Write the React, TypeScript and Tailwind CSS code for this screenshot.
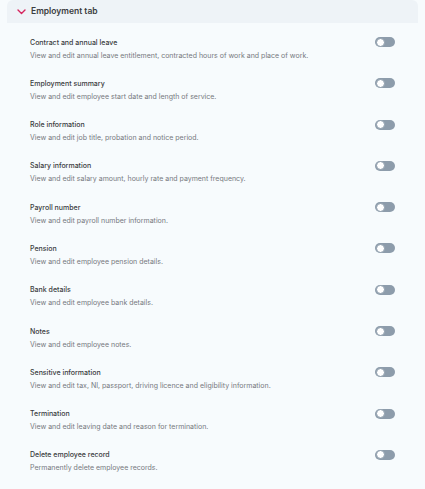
import React, { useState } from "react";

interface Permission {
  title: string;
  description: string;
}

const permissions: Permission[] = [
  {
    title: "Contract and annual leave",
    description:
      "View and edit annual leave entitlement, contracted hours of work and place of work.",
  },
  { title: "Employment summary", description: "View and edit employee start date and length of service." },
  { title: "Role information", description: "View and edit job title, probation and notice period." },
  { title: "Salary information", description: "View and edit salary amount, hourly rate and payment frequency." },
  { title: "Payroll number", description: "View and edit payroll number information." },
  { title: "Pension", description: "View and edit employee pension details." },
  { title: "Bank details", description: "View and edit employee bank details." },
  { title: "Notes", description: "View and edit employee notes." },
  {
    title: "Sensitive information",
    description: "View and edit tax, NI, passport, driving licence and eligibility information.",
  },
  { title: "Termination", description: "View and edit leaving date and reason for termination." },
  { title: "Delete employee record", description: "Permanently delete employee records." },
];

const Toggle: React.FC<{ on: boolean; onChange: () => void }> = ({ on, onChange }) => (
  <button
    type="button"
    onClick={onChange}
    className={`relative block h-[10px] w-[20px] shrink-0 rounded-full ${on ? "bg-[#d6245d]" : "bg-[#8d9cab]"}`}
  >
    <span
      className={`absolute top-[0.5px] h-[9px] w-[9px] rounded-full border border-[#8d9cab] bg-white ${on ? "left-[10.5px]" : "left-[0.5px]"}`}
    />
  </button>
);

const App: React.FC = () => {
  const [enabled, setEnabled] = useState<boolean[]>(permissions.map(() => false));

  const toggle = (i: number) => setEnabled((prev) => prev.map((v, idx) => (idx === i ? !v : v)));

  return (
    <div className="min-h-[489px] w-[425px] bg-[#f7fbfd] font-['Inter',sans-serif]">
      <div className="ml-[7px] mr-[7px] flex h-[23px] items-center rounded-t-[6px] bg-[#eef3f7]">
        <svg width="9" height="6" viewBox="0 0 9 6" className="ml-[10px]" fill="none">
          <path d="M1 1l3.5 3.5L8 1" stroke="#d6245d" strokeWidth="1.4" strokeLinecap="round" strokeLinejoin="round" />
        </svg>
        <span className="ml-[5px] text-[8.5px] font-semibold text-[#3a3c40]">Employment tab</span>
      </div>

      <div className="pt-[12.5px]">
        {permissions.map((p, i) => (
          <div key={p.title} className="flex h-[41.3px] items-start pl-[30px] pr-[30px]">
            <div className="flex-1">
              <div className="text-[7px] leading-[13px] font-medium text-[#3a3c40]">{p.title}</div>
              <div className="text-[7px] leading-[13px] text-[#76797e]">{p.description}</div>
            </div>
            <div className="flex pt-[1.5px]">
              <Toggle on={enabled[i]} onChange={() => toggle(i)} />
            </div>
          </div>
        ))}
      </div>
    </div>
  );
};

export default App;
